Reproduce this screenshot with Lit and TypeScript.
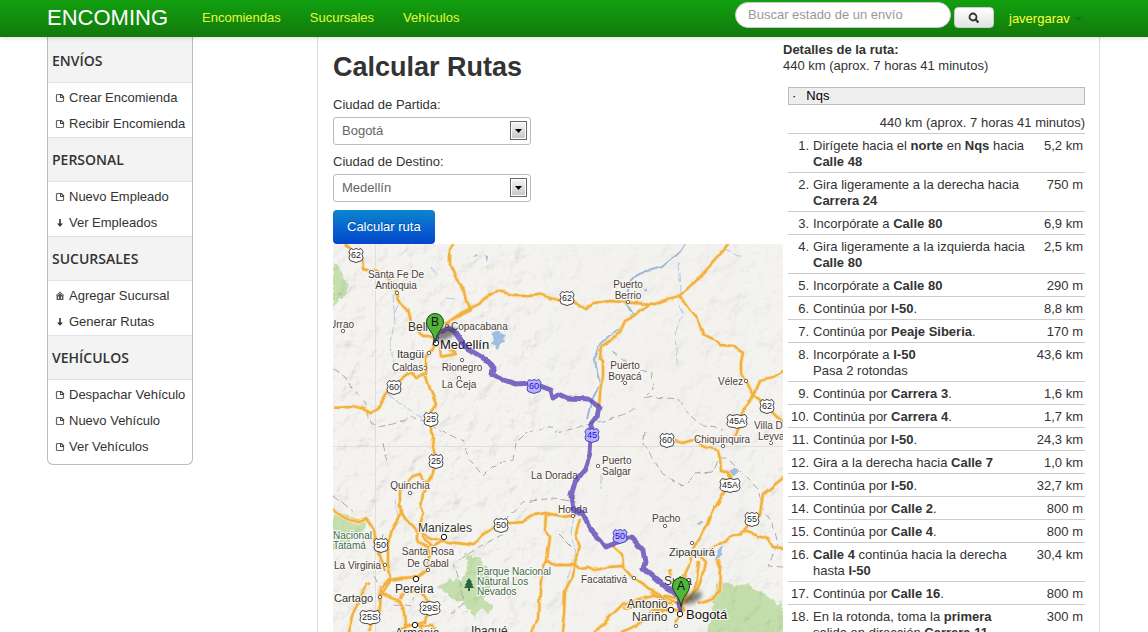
import { LitElement, html, svg, css } from "lit";
import { customElement, property, state } from "lit/decorators.js";

type IconName = "file" | "down" | "home";

interface MenuSection {
  title: string;
  items: { icon: IconName; label: string }[];
}

const SECTIONS: MenuSection[] = [
  {
    title: "ENVÍOS",
    items: [
      { icon: "file", label: "Crear Encomienda" },
      { icon: "file", label: "Recibir Encomienda" },
    ],
  },
  {
    title: "PERSONAL",
    items: [
      { icon: "file", label: "Nuevo Empleado" },
      { icon: "down", label: "Ver Empleados" },
    ],
  },
  {
    title: "SUCURSALES",
    items: [
      { icon: "home", label: "Agregar Sucursal" },
      { icon: "down", label: "Generar Rutas" },
    ],
  },
  {
    title: "VEHÍCULOS",
    items: [
      { icon: "file", label: "Despachar Vehículo" },
      { icon: "file", label: "Nuevo Vehículo" },
      { icon: "file", label: "Ver Vehículos" },
    ],
  },
];

const icons = {
  file: svg`<path d="M2.500 1.500h3.500l2.500 2.500v3.500q0 1-1 1h-5q-1 0-1-1v-5q0-1 1-1z" fill="#fff" stroke="#666" stroke-width="1.200"/><path d="M5 1h1.500L9 3.500V5H5z" fill="#444"/><path d="M6 2.300 7.700 4H6z" fill="#fff"/>`,
  down: svg`<path d="M4.200 1h1.600v4.500h2.200L5 8.800 2 5.500h2.200z" fill="#333"/>`,
  home: svg`<path d="M5 .6 9.400 4.600H8.400V9H1.600V4.600H.6z" fill="#555"/><path d="M2 4.400 5 1.900l3 2.500" fill="none" stroke="#ddd" stroke-width=".7"/><path d="M3 5.400h1V8H3zM6 5.400h1V8H6z" fill="#eee"/>`,
};

/* Side menu */
@customElement("side-menu")
export class SideMenu extends LitElement {
  static styles = css`
    :host { display: block; }
    .menu {
      border: 1px solid #bbb;
      border-top: 0;
      border-radius: 0 0 6px 6px;
      padding: 1px 0 4px;
      background: linear-gradient(#f3f3f3 20px, #fff 20px);
      overflow: hidden;
    }
    .title {
      margin: 0;
      padding: 0 4px;
      background: #f3f3f3;
      border: 1px solid #e2e2e2;
      border-width: 1px 0;
      font: 600 14px/43px "Open Sans", "Noto Sans", sans-serif;
      color: #333;
    }
    .title:first-child { border-top-color: #f3f3f3; }
    .list { list-style: none; margin: 0; padding: 2px 0 0; }
    .link {
      display: flex;
      align-items: center;
      gap: 4px;
      padding: 0 7px;
      line-height: 26px;
      color: #333;
      text-decoration: none;
      white-space: nowrap;
    }
    .icon { width: 10px; height: 10px; flex: none; }
  `;

  render() {
    return html`<nav class="menu" aria-label="Menú">
      ${SECTIONS.map(
        (s) => html`<h2 class="title">${s.title}</h2>
          <ul class="list">
            ${s.items.map(
              (i) => html`<li>
                <a class="link" href="#"><svg class="icon" viewBox="0 0 10 10" aria-hidden="true">${icons[i.icon]}</svg>${i.label}</a>
              </li>`
            )}
          </ul>`
      )}
    </nav>`;
  }
}

/* Map data, in map units */
const ROADS = [
  "M12 0 24 10 29 15 30 25 40 27 52 30 60 42 63 50 65 56 75 65 78 78 90 93 102 93",
  "M120 0 117 6 117 20 122 32 130 43 133 57 138 66 130 70 118 76 108 87",
  "M112 80 130 68 148 59 158 49 165 47 180 51 195 51 205 50 225 56 242 58 253 65 260 60 277 57 302 59 322 60 337 54 346 52 365 35 384 14 396 0",
  "M346 52 354 60 358 67 363 73 370 90 382 96 387 101 400 102 410 109 408 118 408 130 413 138 421 151 434 162 450 178",
  "M450 127 440 133 427 136 424 144 421 151 411 163 408 180 401 192",
  "M342 197 350 199 362 195 371 203 385 206 387 215 388 227 395 228 398 233 393 245 380 267 375 280 367 293 361 303 358 318 352 330 355 345 350 360",
  "M316 60 305 70 292 77 287 88 277 97 268 103 267 115 270 118 270 133 268 140 267 150 266 163",
  "M102 99 97 107 93 115 93 130 82 133 78 128 70 134 60 143 50 155 45 165 38 169 30 165 20 162 0 163",
  "M106 103 107 113 123 110 116 105",
  "M93 132 97 145 103 160 98 168 98 188 101 193 100 204 103 216 98 235 90 250 88 262 91 270 87 280 90 290 98 294 115 298 140 301 150 290 158 286 167 280 190 278 202 271 212 269 228 272 243 270",
  "M213 270 212 285 216 293 213 316 210 322 207 345 206 375 198 388",
  "M213 316 222 321 242 321 246 324 255 323 262 326 275 323 289 322 300 334 316 344 330 352 347 360",
  "M247 275 243 290 246 300 242 320 238 335 232 347 231 370 229 388",
  "M280 302 289 310 290 322",
  "M67 262 67 245 75 238 80 232 87 230 91 238 97 240",
  "M67 258 68 270 60 282 55 300 55 320 58 333 47 345 46 365 36 388",
  "M68 270 80 283 85 290 85 298 95 302 97 312 95 326 85 333 68 334 58 336 48 350 65 356 71 368 72 382 85 382 100 381 104 388",
  "M90 292 100 303 108 298 111 294",
  "M0 265 15 275 25 278 33 275 41 285 43 300 47 315 52 326",
  "M38 340 34 339 28 350 20 370 15 388",
  "M67 355 72 345 90 350 96 358 92 378 68 385 M92 388 85 380",
  "M351 332 345 336 336 342 M337 325 341 341",
  "M384 315 388 325 387 345 380 355 365 360 M366 318 363 340 358 356",
  "M362 308 372 318 369 332 364 346 352 358",
  "M362 312 378 305 395 295 411 287 435 295 440 303 450 304 M411 287 427 270 430 250 450 234",
  "M350 356 335 352 320 352 290 360 270 380 262 388 M350 366 320 366 303 382 288 388 M345 350 352 366 342 378",
  "M290 364 320 360 340 360 M318 348 335 358",
];

const ROUTE =
  "M102 100 106 89 115 84 121 87 128 97 133 104 145 111 155 117 160 124 159 131 170 136 183 140 200 139 210 143 218 146 220 154 226 150 235 154 255 155 266 163 264 172 258 180 258 195 257 210 252 225 242 238 238 252 240 265 250 270 258 286 268 296 273 303 285 298 292 294 299 294 310 306 312 318 310 324 322 334 335 345 346 352 348 366";

const RIVERS = [
  "M351 0 345 10 330 22 315 26 300 34 294 45 293 58 300 70 292 77 287 85 275 93 267 100 262 115 264 128 267 140 258 158 254 175",
  "M60 50 62 80 58 100 60 120 M65 60 60 75 M62 255 66 280 M54 150 80 168 100 178",
  "M345 18 347 45 346 62 350 70 342 90 344 120 M390 5 405 12 410 12 M113 54 122 55 M98 23 104 30",
  "M241 272 238 290 242 310 235 330 230 370 M268 230 268 245",
];

const BORDERS = [
  "M0 125 12 133 18 144 28 152 34 166 38 178 45 183 60 180 78 173 95 178 115 190 130 197 136 215 142 222 150 232 160 222 180 215 183 200 195 188 220 182",
  "M280 106 290 115 305 125 318 130 320 145 310 155 320 153 345 155 352 166 370 182 390 185 M222 188 240 185 253 180 275 176 290 172 305 162",
  "M312 188 310 200 330 230 350 242 362 230 378 228 385 215 395 215 410 230 425 245 430 265 440 280 445 300 435 322 450 323",
  "M0 252 20 268 M50 290 45 320 40 330 48 345 M170 290 143 305 120 320 128 340 130 360 118 370 M170 276 190 258 220 254 243 258",
  "M50 200 56 222 M60 360 80 362 82 350 M225 290 240 305",
];

const PARKS = [
  "M0 20 6 24 15 42 12 52 0 60z",
  "M0 268 12 270 22 276 34 278 32 286 18 292 15 305 0 306z",
  "M132 308 138 313 147 314 150 322 155 325 153 332 160 340 152 346 152 355 159 362 156 368 147 366 142 376 138 366 132 366 130 358 118 357 114 349 104 342 112 340 116 334 128 337 134 326z",
  "M385 336 400 342 413 340 425 347 450 362 450 440 365 440z",
];

const SHIELDS: [number, number, string, boolean?][] = [
  [23, 11, "62"], [234, 54, "62"], [61, 143, "60"], [98, 175, "25"], [103, 217, "25"],
  [334, 196, "60"], [434, 162, "62"], [404, 177, "45A"], [397, 241, "45A"], [168, 281, "50"],
  [48, 301, "50"], [97, 364, "29S"], [37, 373, "25S"], [419, 275, "55"],
  [201, 142, "60", true], [259, 191, "45", true], [287, 292, "50", true],
];

const TOWNS: [number, number][] = [
  [64, 49], [10, 87], [96, 109], [92, 124], [129, 116], [126, 134], [295, 58], [292, 139],
  [413, 137], [265, 222], [332, 282], [359, 299], [301, 334], [240, 272], [77, 249], [52, 321],
  [95, 326], [47, 353], [390, 202], [114, 82], [438, 199], [343, 382],
];

const CITIES: [number, number][] = [[103, 99], [111, 293], [83, 335], [82, 381], [338, 366], [347, 370]];

const LABELS: [number, number, string, string][] = [
  [63, 34, "Santa Fe De", "mid"], [63, 45, "Antioquia", "mid"], [-4, 84, "Urrao", ""],
  [75, 87, "Bello", "town"], [118, 86, "Copacabana", ""], [107, 105, "Medellín", "city"],
  [64, 114, "Itagüi", "small-town"], [59, 127, "Caldas", ""], [129, 127, "Rionegro", "mid"],
  [126, 144, "La Ceja", "mid"], [295, 44, "Puerto", "mid"], [295, 55, "Berrio", "mid"],
  [292, 125, "Puerto", "mid"], [292, 136, "Boyacá", "mid"], [385, 141, "Vélez", ""],
  [421, 185, "Villa De", ""], [425, 196, "Leyva", ""], [361, 199, "Chiquinquira", ""],
  [198, 235, "La Dorada", ""], [225, 269, "Honda", ""], [269, 220, "Puerto", ""],
  [269, 231, "Salgar", ""], [319, 278, "Pacho", ""], [336, 312, "Zipaquirá", "small-town"],
  [248, 339, "Facatativá", ""], [331, 341, "Suba", "town"], [294, 364, "Antonio", "town"],
  [299, 377, "Nariño", "town"], [353, 375, "Bogotá", "city"], [77, 245, "Quinchia", "mid"],
  [85, 288, "Manizales", "town"], [95, 311, "Santa Rosa", "mid"], [95, 323, "De Cabal", "mid"],
  [62, 349, "Pereira", "town"], [1, 358, "Cartago", "small-town"], [1, 325, "La Virginia", ""],
  [0, 295, "Nacional", "park"], [0, 305, "Tatamá", "park"], [144, 331, "Parque Nacional", "park"],
  [144, 341, "Natural Los", "park"], [144, 351, "Nevados", "park"], [138, 391, "Ibagué", "town"],
  [62, 393, "Armenia", "town"], [330, 397, "Usme", "town"],
];

@customElement("route-map")
export class RouteMap extends LitElement {
  static styles = css`
    :host { display: block; }
    .map { display: block; width: 100%; background: #f3f2ee; }
    .rough { filter: url(#rough); }
    .jagged { filter: url(#jagged); }
    .road-case { fill: none; stroke: #fadfa6; stroke-width: 4; stroke-linejoin: round; }
    .road { fill: none; stroke: #f0b043; stroke-width: 2.3; stroke-linejoin: round; }
    .river { fill: none; stroke: #b4cae4; stroke-width: 1; stroke-dasharray: 9 2; }
    .river-main { fill: none; stroke: #9dbad9; stroke-width: 2; stroke-linejoin: round; }
    .border { fill: none; stroke: #aaa; stroke-width: 1; stroke-dasharray: 7 4; }
    .green { fill: #bfdca5; }
    .lake { fill: #9fbfe0; }
    .grid { fill: none; stroke: #dedede; stroke-width: 1; }
    .route { fill: none; stroke: #4a30b0; stroke-opacity: 0.7; stroke-width: 5; stroke-linejoin: round; stroke-linecap: round; }
    .label {
      font: 10px "Liberation Sans", Arial, sans-serif;
      fill: #4a3c3c;
      stroke: #fbfaf7;
      stroke-width: 2px;
      paint-order: stroke;
    }
    .mid { text-anchor: middle; }
    .small-town { font-size: 11px; fill: #333; }
    .town { font-size: 12px; fill: #333; }
    .city { font-size: 13px; fill: #111; }
    .label.park { fill: #3c6b4c; }
    .shield { fill: #fff; stroke: #444; stroke-width: 1; }
    .num { font: 9px "Liberation Sans", Arial, sans-serif; fill: #222; text-anchor: middle; }
    .hot { fill: #b5b0ff; stroke: #4b46b0; }
    .hot-num { fill: #1b12c8; }
    .dot { fill: #fff; stroke: #666; stroke-width: 1; }
    .dot-city { fill: #fff; stroke: #111; stroke-width: 1; }
    .shadow { fill: #333; opacity: 0.6; filter: blur(2px); }
    .pin { fill: #4fb63a; stroke: #1d3d14; stroke-width: 1; }
    .pin-letter { font: 12px "Liberation Sans", Arial, sans-serif; fill: #111; text-anchor: middle; }
  `;

  private outline([x, y, n]: [number, number, string, boolean?], part: string) {
    const w = n.length > 2 ? 10 : 7;
    const d = `M${x - w + 2} ${y - 6.5}q${(w - 2) / 2} 2 ${w - 2} 0q${(w - 2) / 2} 2 ${w - 2} 0l2 3q-2 3 0 6q0 4 -${w - 3} 4l-3 1l-3 -1q-${w - 3} 0 -${w - 3} -4q2 -3 0 -6z`;
    return svg`<path class="shield ${part}" d=${d}/>`;
  }

  private shield(s: [number, number, string, boolean?]) {
    const hot = s[3];
    return svg`${this.outline(s, hot ? "hot" : "")}<text class="num ${hot ? "hot-num" : ""}" x=${s[0]} y=${s[1] + 3}>${s[2]}</text>`;
  }

  private pin(x: number, y: number, letter: string) {
    return svg`<path class="pin" d="M${x} ${y}C${x - 1} ${y - 11} ${x - 8.5} ${y - 14} ${x - 8.5} ${y - 21}a8.5 8.5 0 0 1 17 0C${x + 8.5} ${y - 14} ${x + 1} ${y - 11} ${x} ${y}z"/>
      <text class="pin-letter" x=${x} y=${y - 17}>${letter}</text>`;
  }

  private shade(x: number, y: number) {
    return svg`<ellipse class="shadow" cx=${x + 11} cy=${y - 9} rx="11" ry="5" transform="rotate(-26 ${x + 11} ${y - 9})"/>`;
  }

  render() {
    return html`<svg class="map" viewBox="0 0 450 440" role="img" aria-label="Mapa de la ruta de Bogotá a Medellín">
      <defs>
        <filter id="relief" x="0" y="0" width="100%" height="100%">
          <feTurbulence type="fractalNoise" baseFrequency="0.05" numOctaves="4" seed="7" />
          <feColorMatrix values="0 0 0 0 0  0 0 0 0 0  0 0 0 0 0  1 0 0 0 0" />
          <feDiffuseLighting surfaceScale="9" lighting-color="#fff" diffuseConstant="1.28">
            <feDistantLight azimuth="225" elevation="54" />
          </feDiffuseLighting>
        </filter>
        <filter id="rough" filterUnits="userSpaceOnUse" x="0" y="0" width="450" height="440">
          <feTurbulence type="fractalNoise" baseFrequency="0.09" numOctaves="1" seed="3" />
          <feDisplacementMap in="SourceGraphic" scale="5" xChannelSelector="R" yChannelSelector="G" />
        </filter>
        <filter id="jagged" filterUnits="userSpaceOnUse" x="0" y="0" width="450" height="440">
          <feTurbulence type="fractalNoise" baseFrequency="0.15" numOctaves="2" seed="5" />
          <feDisplacementMap in="SourceGraphic" scale="8" xChannelSelector="R" yChannelSelector="G" />
        </filter>
        <linearGradient id="fade" x1="0" x2="1"><stop offset="0.4" stop-color="#fff" /><stop offset="0.6" stop-color="#555" /><stop offset="1" stop-color="#ccc" /></linearGradient>
        <mask id="hills"><rect width="450" height="440" fill="url(#fade)" /></mask>
      </defs>
      <g class="jagged">${PARKS.map((d) => svg`<path class="green" d=${d}/>`)}</g>
      <g mask="url(#hills)"><rect width="450" height="440" filter="url(#relief)" opacity="0.1" /></g>
      <path class="grid" d="M42.500 0V440M0 202.500H450" />
      <g class="rough">
        ${BORDERS.map((d) => svg`<path class="border" d=${d}/>`)}
        ${RIVERS.map((d, i) => svg`<path class=${i ? "river" : "river-main"} d=${d}/>`)}
        <path class="lake" d="M158 90l5-2 3-2 2 4 4 1-3 4 3 4-5 1-2 6-3-5-4-1 2-5zM397 226l6-3 3 4-5 5-5-1zM381 317l8-6 2-10-5 6zM364 280l6-5 1 3-6 4zM310 46l5-2-2 5zM140 13l3-3 2 2zM152 11l3 1-1 5z" />
        ${ROADS.map((d) => svg`<path class="road-case" d=${d}/>`)}
        ${ROADS.map((d) => svg`<path class="road" d=${d}/>`)}
      </g>
      ${TOWNS.map(([x, y]) => svg`<circle class="dot" cx=${x} cy=${y} r="1.700"/>`)}
      ${LABELS.map(([x, y, t, c]) => svg`<text class="label ${c}" x=${x} y=${y}>${t}</text>`)}
      <path d="M136 334l3 4h-1l2 3h-1l2 3h-4v3h-2v-3h-4l2-3h-1l2-3h-1z" fill="#2f6040" />
      <g class="rough"><path class="route" d=${ROUTE} /></g>
      ${SHIELDS.map((s) => this.shield(s))}
      ${this.shade(102, 99)} ${this.shade(348, 363)}
      ${CITIES.map(([x, y]) => svg`<circle class="dot-city" cx=${x} cy=${y} r="2.700"/>`)}
      ${this.pin(102, 99, "B")} ${this.pin(348, 363, "A")}
    </svg>`;
  }
}

/* Directions list */
const b = (t: string) => html`<b>${t}</b>`;
const STEPS: [unknown, string][] = [
  [html`Dirígete hacia el ${b("norte")} en ${b("Nqs")} hacia ${b("Calle 48")}`, "5,2 km"],
  [html`Gira ligeramente a la derecha hacia ${b("Carrera 24")}`, "750 m"],
  [html`Incorpórate a ${b("Calle 80")}`, "6,9 km"],
  [html`Gira ligeramente a la izquierda hacia ${b("Calle 80")}`, "2,5 km"],
  [html`Incorpórate a ${b("Calle 80")}`, "290 m"],
  [html`Continúa por ${b("I-50")}.`, "8,8 km"],
  [html`Continúa por ${b("Peaje Siberia")}.`, "170 m"],
  [html`Incorpórate a ${b("I-50")}<br />Pasa 2 rotondas`, "43,6 km"],
  [html`Continúa por ${b("Carrera 3")}.`, "1,6 km"],
  [html`Continúa por ${b("Carrera 4")}.`, "1,7 km"],
  [html`Continúa por ${b("I-50")}.`, "24,3 km"],
  [html`Gira a la derecha hacia ${b("Calle 7")}`, "1,0 km"],
  [html`Continúa por ${b("I-50")}.`, "32,7 km"],
  [html`Continúa por ${b("Calle 2")}.`, "800 m"],
  [html`Continúa por ${b("Calle 4")}.`, "800 m"],
  [html`${b("Calle 4")} continúa hacia la derecha hasta ${b("I-50")}`, "30,4 km"],
  [html`Continúa por ${b("Calle 16")}.`, "800 m"],
  [html`En la rotonda, toma la ${b("primera")} salida en dirección ${b("Carrera 11")}`, "300 m"],
];

@customElement("route-directions")
export class RouteDirections extends LitElement {
  @property() summary = "440 km (aprox. 7 horas 41 minutos)";

  static styles = css`
    :host { display: block; padding-top: 5px; line-height: 16px; color: #333; }
    .heading { margin: 0; font-size: 13px; line-height: 16px; }
    .total { margin: 0; }
    .panel { margin: 13px 0 0 5px; }
    .origin {
      display: flex;
      gap: 10px;
      padding: 0 3px;
      border: 1px solid #bbb;
      background: #eee;
      color: #000;
    }
    .sum { margin: 10px 0 2px; text-align: right; }
    .steps { width: 100%; border-collapse: collapse; table-layout: fixed; }
    .cell { padding: 4px 0 2px; border-top: 1px solid #ccc; vertical-align: top; }
    .n { width: 21px; text-align: right; }
    .text { padding-left: 4px; }
    .dist { width: 54px; padding-right: 2px; text-align: right; white-space: nowrap; }
  `;

  render() {
    return html`<h2 class="heading">Detalles de la ruta:</h2>
      <p class="total">${this.summary}</p>
      <div class="panel">
        <div class="origin"><span>·</span><span>Nqs</span></div>
        <p class="sum">${this.summary}</p>
        <table class="steps">
          <tbody>
            ${STEPS.map(
              ([text, dist], i) => html`<tr>
                <td class="cell n">${i + 1}.</td>
                <td class="cell text">${text}</td>
                <td class="cell dist">${dist}</td>
              </tr>`
            )}
          </tbody>
        </table>
      </div>`;
  }
}

@customElement("app-root")
export class AppRoot extends LitElement {
  @state() private from = "Bogotá";
  @state() private to = "Medellín";

  static styles = css`
    :host {
      display: flex;
      flex-direction: column;
      height: 100vh;
      overflow: hidden;
      background: #fff;
      font: 13px/18px "Liberation Sans", Arial, sans-serif;
      color: #333;
    }
    .bar {
      flex: none;
      display: flex;
      height: 37px;
      padding: 0 48px 0 47px;
      background: linear-gradient(#11a00f, #13790c);
      box-shadow: 0 1px 4px rgba(0, 0, 0, 0.15);
      z-index: 1;
    }
    .brand { font-size: 22px; line-height: 35px; color: #fff; text-decoration: none; margin-right: 20px; }
    .nav { display: flex; }
    .nav-link { padding: 0 15px 0 14px; line-height: 36px; color: #e6fa3c; text-decoration: none; }
    .search { display: flex; gap: 3px; margin-left: auto; padding-top: 2px; }
    .query {
      box-sizing: border-box;
      width: 216px;
      height: 26px;
      padding: 0 12px 2px;
      border: 1px solid #ccc;
      border-radius: 14px;
      background: #fff;
      font: inherit;
      color: #555;
    }
    .query::placeholder { color: #999; opacity: 1; }
    .go {
      display: grid;
      place-items: center;
      box-sizing: border-box;
      width: 40px;
      height: 21px;
      margin-top: 5px;
      padding: 0;
      border: 1px solid #ccc;
      border-radius: 4px;
      background: linear-gradient(#fff, #e3e3e3);
    }
    .user { display: flex; align-items: center; gap: 4px; width: 91px; padding: 0 0 0 15px; line-height: 36px; color: #ffff3c; text-decoration: none; }
    .caret { width: 0; height: 0; border: 4px solid transparent; border-top-color: #147511; border-bottom: 0; }
    .page {
      display: grid;
      grid-template-columns: 146px minmax(0, 1fr);
      column-gap: 124px;
      align-items: start;
      padding: 0 48px 0 47px;
    }
    .content {
      display: grid;
      grid-template-columns: minmax(0, 450px) minmax(297px, 1fr);
      padding: 0 14px 0 15px;
      border: 1px solid #ddd;
      border-width: 0 1px;
    }
    .title { margin: 12px 0 11px; font-size: 27px; line-height: 36px; }
    .label { display: block; margin-bottom: 3px; }
    .pick { display: grid; width: 198px; margin-bottom: 8px; align-items: center; }
    .select {
      grid-area: 1 / 1;
      appearance: none;
      box-sizing: border-box;
      width: 100%;
      height: 28px;
      padding: 0 24px 0 8px;
      border: 1px solid #bbb;
      border-radius: 3px;
      background: #fff;
      font: inherit;
      color: #666;
    }
    .arrow { grid-area: 1 / 1; justify-self: end; margin-right: 3px; pointer-events: none; }
    .calc {
      display: block;
      height: 34px;
      padding: 0 14px;
      border: 0;
      border-radius: 4px;
      background: linear-gradient(#0a86cf, #0446cc);
      color: #fff;
      font: inherit;
      text-shadow: 0 -1px 0 rgba(0, 0, 0, 0.25);
    }
  `;

  private picker(id: string, label: string, value: string, set: (v: string) => void) {
    return html`<label class="label" for=${id}>${label}</label>
      <div class="pick">
        <select class="select" id=${id} @change=${(e: Event) => set((e.target as HTMLSelectElement).value)}>
          ${["Bogotá", "Medellín"].map((c) => html`<option ?selected=${c === value}>${c}</option>`)}
        </select>
        <svg class="arrow" width="18" height="20" aria-hidden="true">
          <defs><linearGradient id="g" x2="0" y2="1"><stop stop-color="#f4f4f4" /><stop offset="1" stop-color="#c8c8c8" /></linearGradient></defs>
          <rect x=".5" y=".5" width="16" height="18" fill="#fff" stroke="#666" />
          <rect x="2" y="2" width="13" height="15" fill="url(#g)" />
          <path d="M5 8h7L8.500 12z" fill="#000" />
        </svg>
      </div>`;
  }

  render() {
    return html`<header class="bar">
        <a class="brand" href="#">ENCOMING</a>
        <nav class="nav" aria-label="Principal">
          <a class="nav-link" href="#">Encomiendas</a>
          <a class="nav-link" href="#">Sucursales</a>
          <a class="nav-link" href="#">Vehículos</a>
        </nav>
        <form class="search" @submit=${(e: Event) => e.preventDefault()}>
          <input class="query" type="text" placeholder="Buscar estado de un envío" aria-label="Buscar estado de un envío" />
          <button class="go" aria-label="Buscar">
            <svg width="12" height="12" viewBox="0 0 12 12"><circle cx="5" cy="5" r="3.500" fill="none" stroke="#333" stroke-width="1.800" /><path d="M7.500 7.500 10.500 10.500" stroke="#333" stroke-width="2.200" /></svg>
          </button>
        </form>
        <a class="user" href="#">javergarav<span class="caret"></span></a>
      </header>
      <div class="page">
        <side-menu></side-menu>
        <main class="content">
          <section>
            <h1 class="title">Calcular Rutas</h1>
            ${this.picker("from", "Ciudad de Partida:", this.from, (v) => (this.from = v))}
            ${this.picker("to", "Ciudad de Destino:", this.to, (v) => (this.to = v))}
            <button class="calc">Calcular ruta</button>
            <route-map></route-map>
          </section>
          <route-directions></route-directions>
        </main>
      </div>`;
  }
}
